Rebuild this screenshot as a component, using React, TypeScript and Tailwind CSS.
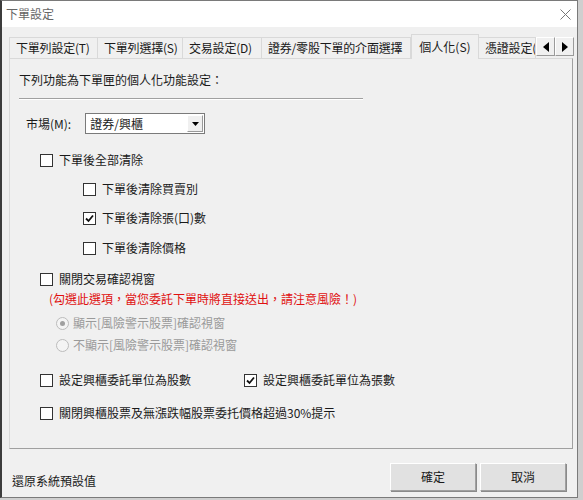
import React from "react";

const font = { fontFamily: '"Noto Sans CJK TC", "Noto Sans", sans-serif' };

function CheckBox({ checked = false }: { checked?: boolean }) {
  return (
    <span className="inline-flex h-[13px] w-[13px] shrink-0 items-center justify-center border border-[#333] bg-white">
      {checked && (
        <svg width="9" height="9" viewBox="0 0 9 9">
          <path d="M1 4.5 L3.5 7 L8 1.5" fill="none" stroke="#111" strokeWidth="1.8" />
        </svg>
      )}
    </span>
  );
}

function Radio({ checked = false }: { checked?: boolean }) {
  return (
    <span className="inline-flex h-[13px] w-[13px] shrink-0 items-center justify-center rounded-full border border-[#bcbcbc] bg-[#f4f4f4]">
      {checked && <span className="h-[5px] w-[5px] rounded-full bg-[#a0a0a0]" />}
    </span>
  );
}

function Option({
  label,
  checked,
  className = "",
}: {
  label: string;
  checked?: boolean;
  className?: string;
}) {
  return (
    <div className={`flex items-center gap-[6px] ${className}`}>
      <CheckBox checked={checked} />
      <span className="leading-[16px] text-[#1a1a1a]">{label}</span>
    </div>
  );
}

function Tab({ label, w, active = false }: { label: string; w: string; active?: boolean }) {
  if (active) {
    return (
      <div
        className={`${w} relative z-10 -mb-px flex h-[25px] items-center justify-center border border-b-0 border-[#d9d9d9] bg-[#f0f0f0] text-[#1a1a1a]`}
      >
        {label}
      </div>
    );
  }
  return (
    <div
      className={`${w} flex h-[21px] items-center overflow-hidden whitespace-nowrap border-r border-t border-[#d9d9d9] bg-[#f0f0f0] pl-[6px] tracking-[-0.2px] text-[#1a1a1a]`}
    >
      {label}
    </div>
  );
}

function ArrowButton({ dir }: { dir: "left" | "right" }) {
  return (
    <div className="flex h-[19px] w-[19px] items-center justify-center border border-[#9a9a9a] bg-[#f0f0f0] border-t-white border-l-white">
      <svg width="6" height="10" viewBox="0 0 6 10">
        {dir === "left" ? <path d="M6 0 L0 5 L6 10 Z" fill="#000" /> : <path d="M0 0 L6 5 L0 10 Z" fill="#000" />}
      </svg>
    </div>
  );
}

export default function App() {
  return (
    <div className="h-[500px] w-[583px] overflow-hidden bg-[#cfcfcf] text-[12px]" style={font}>
      <div className="h-[498px] w-[578px] border border-l-2 border-[#7a7a7a] border-l-[#3c3c3c] bg-[#f0f0f0]">
        {/* title bar */}
        <div className="flex h-[26px] items-center justify-between bg-white pl-[4px] pr-[6px]">
          <span className="text-[12px] text-[#666]">下單設定</span>
          <svg width="11" height="11" viewBox="0 0 11 11">
            <path d="M0.5 0.5 L10.5 10.5 M10.5 0.5 L0.5 10.5" stroke="#777" strokeWidth="1" />
          </svg>
        </div>

        {/* tabs */}
        <div className="mt-[7px] flex items-end pl-[7px]">
          <div className="flex items-end border-l border-[#d9d9d9]">
            <Tab label="下單列設定(T)" w="w-[88px]" />
            <Tab label="下單列選擇(S)" w="w-[85px]" />
            <Tab label="交易設定(D)" w="w-[79px]" />
            <Tab label="證券/零股下單的介面選擇" w="w-[149px]" />
          </div>
          <Tab label="個人化(S)" w="w-[68px]" active />
          <div className="flex items-end">
            <Tab label="憑證設定(C)" w="w-[57px]" />
          </div>
          <div className="mb-[2px] flex">
            <ArrowButton dir="left" />
            <ArrowButton dir="right" />
          </div>
        </div>

        {/* panel */}
        <div className="ml-[7px] h-[391px] w-[564px] border border-[#d9d9d9] border-b-[#a0a0a0] border-r-[#a0a0a0] bg-[#f0f0f0] pl-[9px] pt-[13px] text-[#1a1a1a]">
          <div className="leading-[16px]">下列功能為下單匣的個人化功能設定：</div>
          <div className="mt-[10px] h-[2px] w-[344px] border-b border-t border-b-white border-t-[#a0a0a0]" />

          <div className="ml-[7px] mt-[13px] flex items-center gap-[14px]">
            <span>市場(M):</span>
            <div className="flex h-[21px] w-[120px] items-center border border-[#7a7a7a] bg-white pl-[4px]">
              <span className="flex-1">證券/興櫃</span>
              <div className="mr-px flex h-[17px] w-[16px] items-center justify-center border border-[#9a9a9a] border-l-white border-t-white bg-[#f0f0f0]">
                <svg width="7" height="4" viewBox="0 0 7 4">
                  <path d="M0 0 L7 0 L3.5 4 Z" fill="#000" />
                </svg>
              </div>
            </div>
          </div>

          <Option className="ml-[21px] mt-[18px]" label="下單後全部清除" />
          <Option className="ml-[64px] mt-[13px]" label="下單後清除買賣別" />
          <Option className="ml-[64px] mt-[13px]" label="下單後清除張(口)數" checked />
          <Option className="ml-[64px] mt-[14px]" label="下單後清除價格" />

          <Option className="ml-[21px] mt-[15px]" label="關閉交易確認視窗" />
          <div className="ml-[30px] mt-[4px] leading-[16px] text-[#e01010]">
            (勾選此選項，當您委託下單時將直接送出，請注意風險！)
          </div>
          <div className="ml-[37px] mt-[8px] flex items-center gap-[4px] text-[#9a9a9a]">
            <Radio checked />
            <span className="leading-[16px]">顯示[風險警示股票]確認視窗</span>
          </div>
          <div className="ml-[37px] mt-[6px] flex items-center gap-[4px] text-[#9a9a9a]">
            <Radio />
            <span className="leading-[16px]">不顯示[風險警示股票]確認視窗</span>
          </div>

          <div className="ml-[21px] mt-[19px] flex">
            <Option className="w-[204px]" label="設定興櫃委託單位為股數" />
            <Option label="設定興櫃委託單位為張數" checked />
          </div>
          <Option className="ml-[21px] mt-[17px]" label="關閉興櫃股票及無漲跌幅股票委托價格超過30%提示" />
        </div>

        {/* footer */}
        <div className="flex items-center justify-between pl-[10px] pr-[11px] pt-[14px]">
          <span className="mt-[8px] text-[#1a1a1a]">還原系統預設值</span>
          <div className="flex gap-[4px]">
            <button className="h-[28px] w-[86px] border border-[#a0a0a0] border-l-white border-t-white bg-[#e1e1e1] text-[#1a1a1a] shadow-[1px_1px_0_#8a8a8a]">
              確定
            </button>
            <button className="h-[28px] w-[86px] border border-[#a0a0a0] border-l-white border-t-white bg-[#e1e1e1] text-[#1a1a1a] shadow-[1px_1px_0_#8a8a8a]">
              取消
            </button>
          </div>
        </div>
      </div>
    </div>
  );
}
